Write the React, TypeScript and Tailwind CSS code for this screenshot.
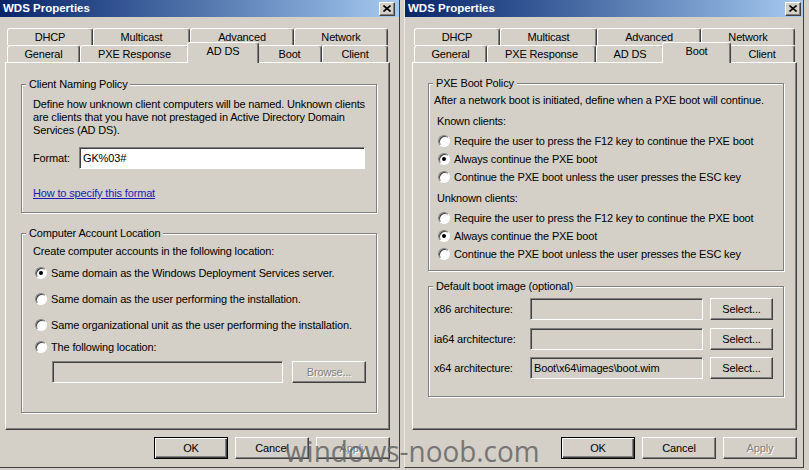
import React from "react";

type TabDef = { label: string; w: string; ws: string };

const row1: TabDef[] = [
  { label: "DHCP", w: "w-[86px]", ws: "w-[90px]" },
  { label: "Multicast", w: "w-[97px]", ws: "w-[101px]" },
  { label: "Advanced", w: "w-[104px]", ws: "w-[108px]" },
  { label: "Network", w: "w-[94px]", ws: "w-[98px]" },
];

const row2: TabDef[] = [
  { label: "General", w: "w-[73px]", ws: "w-[77px]" },
  { label: "PXE Response", w: "w-[109px]", ws: "w-[113px]" },
  { label: "AD DS", w: "w-[68px]", ws: "w-[72px]" },
  { label: "Boot", w: "w-[65px]", ws: "w-[69px]" },
  { label: "Client", w: "w-[66px]", ws: "w-[70px]" },
];

function Tab({ t, selected }: { t: TabDef; selected?: boolean }) {
  if (selected) {
    return (
      <div
        className={`${t.ws} -mx-[2px] h-[21px] -mb-[1px] relative z-10 bg-[#d4d0c8] border-t border-l border-r border-t-white border-l-white border-r-[#404040] shadow-[inset_-1px_0_0_#808080] rounded-t-[3px] flex justify-center items-start pt-[2px] leading-[13px] shrink-0`}
      >
        {t.label}
      </div>
    );
  }
  return (
    <div
      className={`${t.w} h-[17px] bg-[#d4d0c8] border-t border-l border-r border-t-white border-l-white border-r-[#404040] shadow-[inset_-1px_0_0_#808080] rounded-t-[3px] flex justify-center items-center leading-[13px] shrink-0`}
    >
      {t.label}
    </div>
  );
}

function TitleBar({ closePad }: { closePad: string }) {
  return (
    <div
      className={`h-[17px] shrink-0 flex items-center justify-between bg-linear-to-r from-[#0a246a] to-[#a6caf0] pl-[3px] ${closePad}`}
    >
      <span className="text-white font-bold text-[11.5px] leading-none tracking-normal">WDS Properties</span>
      <div className="w-[16px] h-[14px] bg-[#d4d0c8] border border-t-white border-l-white border-r-[#404040] border-b-[#404040] shadow-[inset_-1px_-1px_0_#808080] flex items-center justify-center">
        <svg width="8" height="7" viewBox="0 0 8 7">
          <path d="M0.5 0.5 L7.5 6.5 M7.5 0.5 L0.5 6.5" stroke="#000" strokeWidth="1.6" />
        </svg>
      </div>
    </div>
  );
}

function Radio({ checked }: { checked?: boolean }) {
  return (
    <span className="w-[12px] h-[12px] rounded-full bg-white border border-t-[#808080] border-l-[#808080] border-r-white border-b-white shadow-[inset_1px_1px_0_#404040] flex items-center justify-center shrink-0">
      {checked && <span className="w-[4px] h-[4px] rounded-full bg-black" />}
    </span>
  );
}

function Btn({
  children,
  def,
  disabled,
}: {
  children: React.ReactNode;
  def?: boolean;
  disabled?: boolean;
}) {
  const base =
    "h-[22px] w-[74px] shrink-0 bg-[#d4d0c8] text-[11px] leading-[13px] flex items-center justify-center";
  const frame = def
    ? "border border-black shadow-[inset_1px_1px_0_#fff,inset_-1px_-1px_0_#404040,inset_-2px_-2px_0_#808080]"
    : "border border-t-white border-l-white border-r-[#404040] border-b-[#404040] shadow-[inset_-1px_-1px_0_#808080]";
  const txt = disabled ? "text-[#808080] [text-shadow:1px_1px_0_#fff]" : "text-black";
  return <div className={`${base} ${frame} ${txt}`}>{children}</div>;
}

function Field({
  w,
  white,
  children,
}: {
  w: string;
  white?: boolean;
  children?: React.ReactNode;
}) {
  return (
    <div
      className={`${w} h-[22px] shrink-0 ${white ? "bg-white" : "bg-[#d4d0c8]"} border border-t-[#808080] border-l-[#808080] border-r-white border-b-white shadow-[inset_1px_1px_0_#404040] flex items-center pl-[3px] leading-[13px]`}
    >
      {children}
    </div>
  );
}

function Group({
  title,
  className,
  inner,
  children,
}: {
  title: string;
  className: string;
  inner: string;
  children: React.ReactNode;
}) {
  return (
    <fieldset
      className={`w-[356px] border border-[#808080] shadow-[1px_1px_0_#fff,inset_1px_1px_0_#fff] ${className}`}
    >
      <legend className="ml-[4px] px-[3px] bg-[#d4d0c8] leading-[13px]">{title}</legend>
      <div className={inner}>{children}</div>
    </fieldset>
  );
}

function Tabs({ selected }: { selected: string }) {
  return (
    <div className="ml-[2px] mt-[11px] shrink-0">
      <div className="flex h-[17px]">
        {row1.map((t) => (
          <Tab key={t.label} t={t} />
        ))}
      </div>
      <div className="flex h-[17px] items-end">
        {row2.map((t) => (
          <Tab key={t.label} t={t} selected={t.label === selected} />
        ))}
      </div>
    </div>
  );
}

const panelCls =
  "w-[385px] h-[368px] shrink-0 border border-t-white border-l-white border-r-[#404040] border-b-[#404040] shadow-[inset_-1px_-1px_0_#808080]";

function Buttons() {
  return (
    <div className="w-[385px] mt-[7px] flex justify-end gap-[7px]">
      <Btn def>OK</Btn>
      <Btn>Cancel</Btn>
      <Btn disabled>Apply</Btn>
    </div>
  );
}

function LeftWindow() {
  return (
    <div className="w-[400px] h-[468px] shrink-0 flex flex-col border-r border-b border-r-[#404040] border-b-[#404040]">
      <TitleBar closePad="pr-[4px]" />
      <div className="pl-[5px] flex flex-col">
        <Tabs selected="AD DS" />
        <div className={`${panelCls} pt-[15px] pl-[15px]`}>
          <Group title="Client Naming Policy" className="" inner="pl-[11px] pr-[6px] pt-[7px] pb-[12px]">
            <div className="leading-[13px] whitespace-nowrap">
              <div>Define how unknown client computers will be named. Unknown clients</div>
              <div>are clients that you have not prestaged in Active Directory Domain</div>
              <div>Services (AD DS).</div>
            </div>
            <div className="mt-[10px] flex items-center">
              <span className="w-[46px] leading-[13px]">Format:</span>
              <Field w="w-[286px]" white>
                GK%03#
              </Field>
            </div>
            <div className="mt-[18px] leading-[13px]">
              <span className="text-[#1a1ab8] underline">How to specify this format</span>
            </div>
          </Group>
          <Group title="Computer Account Location" className="mt-[14px]" inner="pl-[11px] pr-[6px] pt-[5px] pb-[29px]">
            <div className="leading-[13px]">Create computer accounts in the following location:</div>
            <div className="mt-[7px] h-[16px] flex items-center gap-[4px] ml-[2px]">
              <Radio checked />
              <span className="leading-[13px]">Same domain as the Windows Deployment Services server.</span>
            </div>
            <div className="mt-[10px] h-[16px] flex items-center gap-[4px] ml-[2px]">
              <Radio />
              <span className="leading-[13px]">Same domain as the user performing the installation.</span>
            </div>
            <div className="mt-[10px] h-[16px] flex items-center gap-[4px] ml-[2px]">
              <Radio />
              <span className="leading-[13px]">Same organizational unit as the user performing the installation.</span>
            </div>
            <div className="mt-[6px] h-[16px] flex items-center gap-[4px] ml-[2px]">
              <Radio />
              <span className="leading-[13px]">The following location:</span>
            </div>
            <div className="mt-[6px] flex items-center ml-[19px] gap-[9px]">
              <Field w="w-[231px]" />
              <Btn disabled>Browse...</Btn>
            </div>
          </Group>
        </div>
        <Buttons />
      </div>
    </div>
  );
}

function RadioRow({ checked, children }: { checked?: boolean; children: React.ReactNode }) {
  return (
    <div className="h-[18px] flex items-center gap-[4px] ml-[4px]">
      <Radio checked={checked} />
      <span className="leading-[13px] whitespace-nowrap">{children}</span>
    </div>
  );
}

function ArchRow({ label, value, className }: { label: string; value?: string; className: string }) {
  return (
    <div className={`flex items-center ${className}`}>
      <span className="w-[96px] leading-[13px]">{label}</span>
      <Field w="w-[173px]">{value}</Field>
      <div className="ml-[7px]">
        <div className="h-[22px] w-[63px] bg-[#d4d0c8] border border-t-white border-l-white border-r-[#404040] border-b-[#404040] shadow-[inset_-1px_-1px_0_#808080] flex items-center justify-center leading-[13px]">
          Select...
        </div>
      </div>
    </div>
  );
}

function RightWindow() {
  return (
    <div className="w-[400px] h-[468px] ml-[4px] shrink-0 flex flex-col border-l border-r border-b border-l-[#ece9e2] border-r-[#404040] border-b-[#404040]">
      <TitleBar closePad="pr-[2px]" />
      <div className="pl-[7px] flex flex-col">
        <Tabs selected="Boot" />
        <div className={`${panelCls} pt-[14px] pl-[15px]`}>
          <Group title="PXE Boot Policy" className="" inner="pl-[5px] pr-[4px] pt-[4px] pb-[7px]">
            <div className="leading-[13px] whitespace-nowrap">
              After a network boot is initiated, define when a PXE boot will continue.
            </div>
            <div className="mt-[8px] ml-[3px] leading-[13px]">Known clients:</div>
            <div className="mt-[4px]">
              <RadioRow>Require the user to press the F12 key to continue the PXE boot</RadioRow>
              <RadioRow checked>Always continue the PXE boot</RadioRow>
              <RadioRow>Continue the PXE boot unless the user presses the ESC key</RadioRow>
            </div>
            <div className="mt-[6px] ml-[3px] leading-[13px]">Unknown clients:</div>
            <div className="mt-[4px]">
              <RadioRow>Require the user to press the F12 key to continue the PXE boot</RadioRow>
              <RadioRow checked>Always continue the PXE boot</RadioRow>
              <RadioRow>Continue the PXE boot unless the user presses the ESC key</RadioRow>
            </div>
          </Group>
          <Group title="Default boot image (optional)" className="mt-[9px]" inner="pl-[5px] pr-[4px] pt-[5px] pb-[17px]">
            <ArchRow label="x86 architecture:" className="" />
            <ArchRow label="ia64 architecture:" className="mt-[8px]" />
            <ArchRow label="x64 architecture:" value="Boot\x64\images\boot.wim" className="mt-[7px]" />
          </Group>
        </div>
        <Buttons />
      </div>
    </div>
  );
}

export default function App() {
  return (
    <div className="relative w-[809px] h-[470px] overflow-hidden bg-[#d4d0c8] text-black text-[11px] tracking-[-0.15px] font-['Liberation_Sans',Arial,sans-serif] flex">
      <LeftWindow />
      <RightWindow />
      <div className="absolute left-[285px] top-[436px] pointer-events-none origin-left scale-x-[0.93] text-[30px] leading-none tracking-normal font-['Open_Sans',sans-serif] text-[#666666] opacity-85 whitespace-nowrap">
        windows-noob.com
      </div>
    </div>
  );
}
